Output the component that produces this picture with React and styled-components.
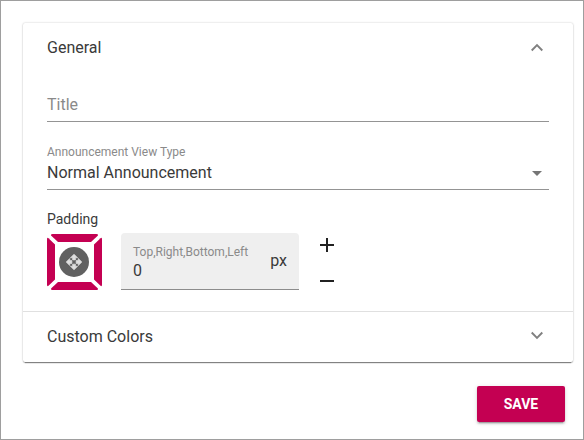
import React from "react";
import styled, { createGlobalStyle } from "styled-components";

const Global = createGlobalStyle`
  * { box-sizing: border-box; }
  body { margin: 0; background: #fff; font-family: Roboto, "Liberation Sans", sans-serif; color: #3a3a3a; }
`;
const Page = styled.main`
  display: flex; flex-direction: column; align-items: flex-end;
  width: 584px; height: 440px; padding: 22px 10px 0 22px;
  border: 1px solid #9e9e9e;
`;
const Accordion = styled.section`
  width: 550px; height: 339px; border-radius: 2px; background: #fff;
  box-shadow: 0 3px 1px -2px rgba(0,0,0,.3), 0 1px 1px 0 rgba(0,0,0,.24), 0 0 2px 0 rgba(0,0,0,.24);
`;
const PanelHeader = styled.header`
  display: flex; align-items: flex-start; justify-content: space-between;
  height: ${(p) => p.$height}px; padding: 15px 24px 0;
  font-size: 16px; line-height: 20px;
  border-top: ${(p) => (p.$divided ? "1px solid #e0e0e0" : "0")};
`;
const Chevron = styled.svg`
  width: 24px; height: 20px; fill: none; stroke: #808080; stroke-width: 1.9;
`;
const PanelBody = styled.div`
  display: flex; flex-direction: column; height: 240px; padding: 0 24px;
`;
const TitleField = styled.div`
  height: 51px; padding-top: 24px; border-bottom: 1px solid #949494;
  font-size: 16px; line-height: 20px; color: #8a8a8a;
`;
const SelectField = styled.div`
  display: flex; justify-content: space-between; height: 68px; padding-top: 22px;
  border-bottom: 1px solid #949494;
`;
const FieldLabel = styled.div`
  font-size: 12px; line-height: 16px; color: #8a8a8a; white-space: nowrap;
`;
const FieldValue = styled.div`
  font-size: 16px; line-height: ${(p) => p.$line}px;
`;
const Caret = styled.svg`
  width: 10px; height: 5px; margin: 27px 7px 0 0; fill: #757575;
`;
const GroupLabel = styled.div`
  margin-top: 21px; font-size: 14px; line-height: 16px;
`;
const PaddingRow = styled.div`
  display: flex; margin-top: 6px;
`;
const SidePicker = styled.svg`
  width: 55px; height: 56px; margin: 1px 19px 0 0;
`;
const NumberField = styled.div`
  display: flex; justify-content: space-between; width: 178px; height: 57px;
  padding: 11px 12px 0; background: #efefef; border-bottom: 1px solid #8c8c8c;
  border-radius: 4px 4px 0 0;
`;
const Unit = styled.span`
  padding-top: 7px; font-size: 16px; line-height: 20px;
`;
const Stepper = styled.svg`
  width: 14px; height: 57px; margin-left: 21px; stroke: #212121; stroke-width: 2; fill: none;
`;
const SaveButton = styled.button`
  width: 88px; height: 36px; margin: 24px 8px 0 0; padding: 0; border: 0; border-radius: 2px;
  background: #c40052; color: #fff; font: 700 14px/36px Roboto, sans-serif;
  box-shadow: 0 3px 1px -2px rgba(0,0,0,.2), 0 2px 2px 0 rgba(0,0,0,.14), 0 1px 5px 0 rgba(0,0,0,.12);
`;

export default function App() {
  return (
    <>
      <Global />
      <Page>
        <Accordion>
          <PanelHeader $height={48}>
            General
            <Chevron viewBox="0 0 24 20"><path d="M6.7 12.5 12 7.2l5.3 5.3" /></Chevron>
          </PanelHeader>
          <PanelBody>
            <TitleField>Title</TitleField>
            <SelectField>
              <div>
                <FieldLabel>Announcement View Type</FieldLabel>
                <FieldValue $line={26}>Normal Announcement</FieldValue>
              </div>
              <Caret viewBox="0 0 10 5"><path d="M0 0h10L5 5z" /></Caret>
            </SelectField>
            <GroupLabel>Padding</GroupLabel>
            <PaddingRow>
              <SidePicker viewBox="0 0 55 56">
                <g fill="#c40052">
                  <path d="M5.5 0h44q2.4 0 1.2 1.7L44 8H11L4.3 1.7Q3.1 0 5.5 0z" />
                  <path d="M5.5 56h44q2.4 0 1.2-1.7L44 48H11l-6.7 6.3Q3.1 56 5.5 56z" />
                  <path d="M0 5.2Q0 3 1.5 4.2L8 10.5v35l-6.5 6.3Q0 53 0 50.8z" />
                  <path d="M55 5.2q0-2.2-1.5-1L47 10.5v35l6.5 6.3q1.5 1.2 1.5-1z" />
                </g>
                <circle cx="27" cy="28" r="15" fill="#616161" />
                <g transform="translate(18.5 19.5) scale(.71)" fill="#e0e0e0" stroke="#e0e0e0" strokeWidth="1">
                  <path d="M10 9h4V6h3l-5-5-5 5h3v3zm-1 1H6V7l-5 5 5 5v-3h3v-4zm14 2-5-5v3h-3v4h3v3l5-5zm-9 3h-4v3H7l5 5 5-5h-3v-3z" />
                </g>
              </SidePicker>
              <NumberField>
                <div>
                  <FieldLabel>Top,Right,Bottom,Left</FieldLabel>
                  <FieldValue $line={22}>0</FieldValue>
                </div>
                <Unit>px</Unit>
              </NumberField>
              <Stepper viewBox="0 0 14 57"><path d="M0 12h14M7 5v14M0 48h14" /></Stepper>
            </PaddingRow>
          </PanelBody>
          <PanelHeader $height={51} $divided>
            Custom Colors
            <Chevron viewBox="0 0 24 20"><path d="M6.7 5.5l5.3 5.3 5.3-5.3" /></Chevron>
          </PanelHeader>
        </Accordion>
        <SaveButton>SAVE</SaveButton>
      </Page>
    </>
  );
}
